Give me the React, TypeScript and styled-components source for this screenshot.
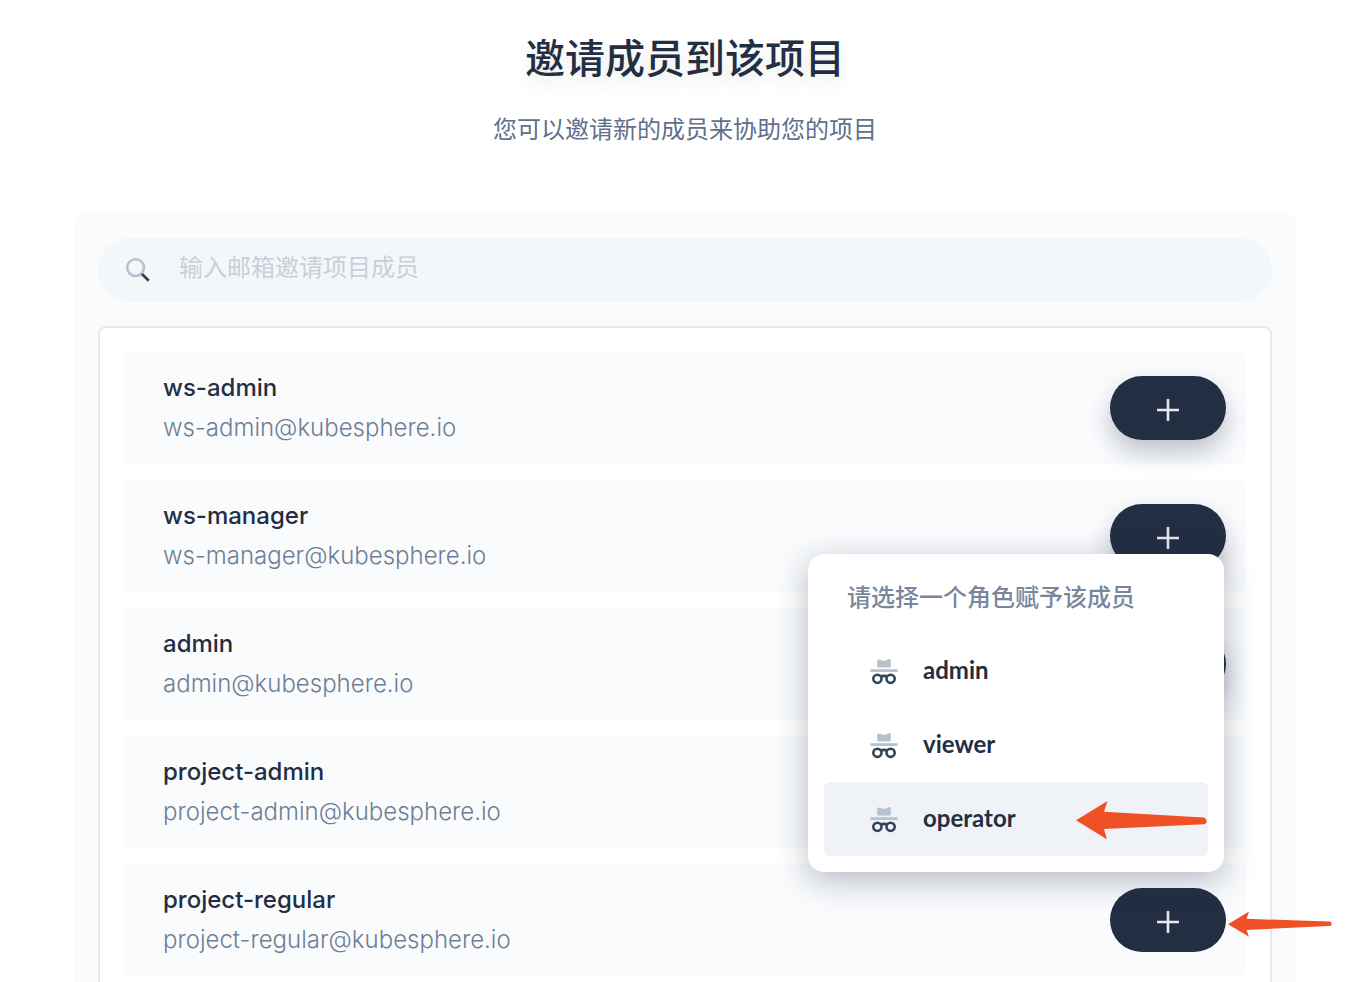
import React from 'react';
import styled, { createGlobalStyle } from 'styled-components';

const GlobalStyle = createGlobalStyle`
  *, *::before, *::after { box-sizing: border-box; }
  body {
    margin: 0;
    background: #fff;
    color: #242e42;
    font-family: Inter, 'Noto Sans CJK SC', sans-serif;
  }
  h1, h2, p, ul { margin: 0; padding: 0; }
  ul { list-style: none; }
  button, input { font: inherit; border: 0; }
`;

const Page = styled.main`
  display: flex;
  flex-direction: column;
  height: 100vh;
  overflow: hidden;
  padding: 29px 70px 0 74px;
`;

const Header = styled.header`
  flex: none;
  text-align: center;
  margin-bottom: 67px;
`;

const Title = styled.h1`
  font-size: 40px;
  line-height: 60px;
  font-weight: 500;
  text-shadow: 0 8px 16px rgba(36, 46, 66, 0.1);
`;

const Subtitle = styled.p`
  margin-top: 24px;
  font-size: 24px;
  line-height: 34px;
  font-weight: 400;
  color: #5f708a;
`;

const Panel = styled.section`
  flex: none;
  padding: 24px;
  border-radius: 8px;
  background: #fafbfd;
`;

const SearchBar = styled.label`
  display: flex;
  align-items: center;
  gap: 26px;
  height: 64px;
  padding: 0 27px;
  border-radius: 32px;
  background: #f3f7fa;

  svg { flex: none; }
`;

const SearchInput = styled.input`
  flex: 1;
  min-width: 0;
  padding: 0 0 4px;
  outline: none;
  background: transparent;
  font-size: 24px;
  line-height: 36px;
  font-weight: 400;
  color: #242e42;

  &::placeholder { color: #c9cfd8; opacity: 1; }
`;

const MemberList = styled.ul`
  display: flex;
  flex-direction: column;
  gap: 16px;
  margin-top: 24px;
  padding: 24px;
  border: 2px solid #e3e9ef;
  border-radius: 8px;
  background: #fff;
`;

const MemberRow = styled.li`
  display: flex;
  align-items: center;
  justify-content: space-between;
  height: 112px;
  padding: 0 20px 0 39px;
  border-radius: 4px;
  background: #f9fbfd;
`;

const MemberName = styled.p`
  font-size: 24px;
  line-height: 40px;
  font-weight: 500;
`;

const MemberEmail = styled.p`
  font-size: 24px;
  line-height: 40px;
  font-weight: 300;
  color: #6f7e94;
`;

const Action = styled.div`
  position: relative;
  flex: none;
`;

const AddButton = styled.button<{ $flat?: boolean }>`
  display: flex;
  align-items: center;
  justify-content: center;
  width: 116px;
  height: 64px;
  padding: 4px 0 0;
  border-radius: 32px;
  background: #242e42;
  cursor: pointer;
  box-shadow: ${(p) => (p.$flat ? 'none' : '0 12px 24px rgba(36, 46, 66, 0.28)')};
`;

const RolePopover = styled.div`
  position: absolute;
  z-index: 2;
  right: 2px;
  bottom: calc(100% + 16px);
  width: 416px;
  padding: 16px;
  border-radius: 16px;
  background: #fff;
  box-shadow: 0 8px 32px rgba(36, 46, 66, 0.32);
`;

const PopoverTitle = styled.h2`
  padding: 8px 23px 16px;
  font-size: 24px;
  line-height: 40px;
  font-weight: 500;
  color: #79879c;
`;

const RoleOption = styled.button<{ $active?: boolean }>`
  position: relative;
  display: flex;
  align-items: center;
  gap: 25px;
  width: 100%;
  height: 74px;
  padding: 0 46px;
  border-radius: 6px;
  background: ${(p) => (p.$active ? '#eff3f8' : 'transparent')};
  color: #242e42;
  font-family: Lato, 'Noto Sans CJK SC', sans-serif;
  font-size: 24px;
  line-height: 32px;
  font-weight: 700;
  text-align: left;
  cursor: pointer;

  svg { flex: none; }
`;

const RoleLabel = styled.span`
  padding-bottom: 2px;
`;

const RoleArrow = styled.svg`
  position: absolute;
  right: 1px;
  top: 19px;
`;

const AddArrow = styled.svg`
  position: absolute;
  z-index: 3;
  left: calc(100% + 2px);
  top: 23px;
`;

const SearchIcon = () => (
  <svg width="28" height="28" viewBox="0 0 28 28" fill="none" aria-hidden="true">
    <circle cx="10.6" cy="11.6" r="8.4" stroke="#b6c2cd" strokeWidth="2.6" />
    <path d="M17 18l6.8 6.8" stroke="#324558" strokeWidth="2.8" />
  </svg>
);

const PlusIcon = () => (
  <svg width="22" height="22" viewBox="0 0 22 22" aria-hidden="true">
    <path d="M11 0v22M0 11h22" stroke="#e6e8ec" strokeWidth="2.6" />
  </svg>
);

const RoleIcon = () => (
  <svg width="28" height="28" viewBox="0 0 28 28" fill="none" aria-hidden="true">
    <path d="M7.2 10.4V3l1.4-.4 5.4 1.5 5.4-2 1.4.4v7.9z" fill="#b6c2cd" />
    <path d="M.4 12.2h27.2v2.8H.4z" fill="#b6c2cd" />
    <circle cx="7.4" cy="21.8" r="4.1" stroke="#324558" strokeWidth="2.6" />
    <circle cx="20.6" cy="21.8" r="4.1" stroke="#324558" strokeWidth="2.6" />
    <path d="M10.8 19.8c1.6-1.2 4.8-1.2 6.4 0" stroke="#324558" strokeWidth="2.6" />
  </svg>
);

const members = [
  { name: 'ws-admin', canAdd: true },
  { name: 'ws-manager', canAdd: true },
  { name: 'admin', canAdd: true },
  { name: 'project-admin', canAdd: false },
  { name: 'project-regular', canAdd: true },
];
const roles = ['admin', 'viewer', 'operator'];
const selectingFor = 'project-regular';
const activeRole = 'operator';

const RoleMenu = () => (
  <RolePopover role="dialog" aria-labelledby="role-title">
    <PopoverTitle id="role-title">请选择一个角色赋予该成员</PopoverTitle>
    {roles.map((role) => (
      <RoleOption key={role} type="button" $active={role === activeRole}>
        <RoleIcon />
        <RoleLabel>{role}</RoleLabel>
        {role === activeRole && (
          <RoleArrow width="131" height="38" viewBox="0 0 131 38" aria-hidden="true">
            <path
              d="M0 19.3L31.5 0 28 10.8 127.5 16.4Q130.6 17 130.6 20T127.5 23.2L28 28 31 38.4z"
              fill="#f05026"
            />
          </RoleArrow>
        )}
      </RoleOption>
    ))}
  </RolePopover>
);

export default function App() {
  return (
    <>
      <GlobalStyle />
      <Page>
        <Header>
          <Title>邀请成员到该项目</Title>
          <Subtitle>您可以邀请新的成员来协助您的项目</Subtitle>
        </Header>
        <Panel>
          <SearchBar>
            <SearchIcon />
            <SearchInput type="text" placeholder="输入邮箱邀请项目成员" aria-label="输入邮箱邀请项目成员" />
          </SearchBar>
          <MemberList>
            {members.map(({ name, canAdd }) => (
              <MemberRow key={name}>
                <div>
                  <MemberName>{name}</MemberName>
                  <MemberEmail>{name}@kubesphere.io</MemberEmail>
                </div>
                {canAdd && (
                  <Action>
                    <AddButton type="button" aria-label={name} $flat={name === selectingFor}>
                      <PlusIcon />
                    </AddButton>
                    {name === selectingFor && (
                      <>
                        <RoleMenu />
                        <AddArrow width="104" height="26" viewBox="0 0 104 26" aria-hidden="true">
                          <path
                            d="M0 13.3L21 .4 18.6 7.8 101.5 10.6Q103.6 11 103.6 13T101.5 15L18.6 19 21 25.8z"
                            fill="#f05026"
                          />
                        </AddArrow>
                      </>
                    )}
                  </Action>
                )}
              </MemberRow>
            ))}
          </MemberList>
        </Panel>
      </Page>
    </>
  );
}
